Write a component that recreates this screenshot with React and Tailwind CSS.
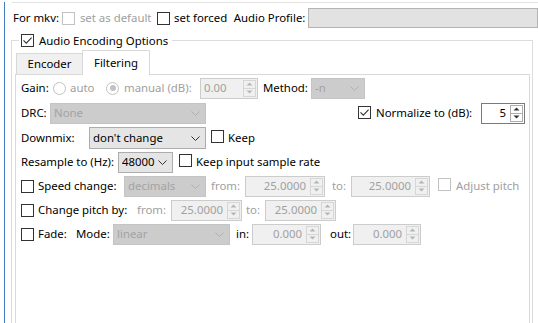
import React from 'react';

const GRAY = 'text-[#a0a0a0]';

const Check = ({ checked, disabled }) => (
    <span className={`inline-flex h-[13px] w-[13px] shrink-0 items-center justify-center border bg-white ${disabled ? 'border-[#c2c2c2]' : 'border-[#333333]'}`}>
        {checked && (
            <svg width="11" height="11" viewBox="0 0 11 11">
                <path d="M1.5 5.3 L4.3 8.2 L9.6 2.6" fill="none" stroke="#333333" strokeWidth="1.1" />
            </svg>
        )}
    </span>
);

const Radio = ({ checked }) => (
    <span className="inline-flex h-[13px] w-[13px] shrink-0 items-center justify-center rounded-full border border-[#c2c2c2] bg-white">
        {checked && <span className="h-[6px] w-[6px] rounded-full bg-[#c2c2c2]" />}
    </span>
);

const Arrow = ({ up, color }) => (
    <svg width="7" height="4" viewBox="0 0 7 4">
        <path d={up ? 'M0.5 3.5 L3.5 0.5 L6.5 3.5 Z' : 'M0.5 0.5 L3.5 3.5 L6.5 0.5 Z'} fill={color} />
    </svg>
);

// spin box with the little up/down buttons on the right
const Spin = ({ w, value, disabled, left }) => (
    <div className={`flex h-[21px] shrink-0 border ${w} ${disabled ? 'border-[#cccccc] bg-[#f0f0f0] text-[#a0a0a0]' : 'border-[#7a7a7a] bg-white text-black'}`}>
        <span className={`flex flex-1 items-center ${left ? 'justify-start pl-[3px]' : 'justify-end pr-[4px]'}`}>{value}</span>
        <span className={`my-[1px] mr-[1px] flex w-[13px] flex-col border ${disabled ? 'border-[#d6d6d6]' : 'border-[#adadad]'}`}>
            <span className={`flex flex-1 items-center justify-center border-b ${disabled ? 'border-[#d6d6d6]' : 'border-[#adadad]'}`}>
                <Arrow up color={disabled ? '#b5b5b5' : '#333333'} />
            </span>
            <span className="flex flex-1 items-center justify-center">
                <Arrow color={disabled ? '#b5b5b5' : '#333333'} />
            </span>
        </span>
    </div>
);

const Combo = ({ w, h = 'h-[21px]', value, disabled }) => (
    <div className={`flex shrink-0 items-center border pl-[3px] pr-[5px] ${w} ${h} ${disabled ? 'border-[#c4c4c4] bg-[#cccccc] text-[#a3a3a3]' : 'border-[#adadad] bg-[#e5e5e5] text-black'}`}>
        <span className="flex-1 overflow-hidden">{value}</span>
        <svg className="shrink-0" width="9" height="5" viewBox="0 0 9 5">
            <path d="M0.5 0.5 L4.5 4.5 L8.5 0.5" fill="none" stroke={disabled ? '#b0b0b0' : '#333333'} strokeWidth="1" />
        </svg>
    </div>
);

const Row = ({ className = '', children }) => (
    <div className={`flex h-[22px] items-center whitespace-nowrap ${className}`}>{children}</div>
);

export default function App() {
    return (
        <div className="h-[323px] w-[538px] overflow-hidden bg-white font-['Noto_Sans','DejaVu_Sans',sans-serif] text-[11.4px] leading-[14px] text-black">
            <div className="ml-[4px] h-full border-l border-[#3f7fc4]">
                <div className="ml-[7px] mt-[2px] h-px bg-[#e3e3e3]"></div>

                {/* mkv flags + profile */}
                <div className="mt-[5px] flex h-[20px] items-center whitespace-nowrap pl-[8px]">
                    <span className="w-[50px]">For mkv:</span>
                    <Check disabled />
                    <span className={`ml-[5px] w-[79px] ${GRAY}`}>set as default</span>
                    <Check />
                    <span className="ml-[4px] w-[61px]">set forced</span>
                    <span className="w-[76px]">Audio Profile:</span>
                    <div className="h-[20px] w-[230px] shrink-0 border border-[#b4b4b4] bg-[#e2e2e2]"></div>
                </div>

                {/* Audio Encoding Options group */}
                <div className="ml-[6px] mt-[12px] h-[340px] w-[522px] border border-[#dcdcdc]">
                    <div className="-mt-[7px] ml-[7px] flex h-[13px] w-fit items-center bg-white px-[2px]">
                        <Check checked />
                        <span className="ml-[5px] pr-[2px]">Audio Encoding Options</span>
                    </div>

                    <div className="relative z-10 mt-[3px] -mb-px ml-[4px] flex h-[25px] items-end">
                        <div className="mb-px flex h-[21px] w-[66px] items-center justify-center border-l border-t border-[#d9d9d9] bg-[#f0f0f0]">Encoder</div>
                        <div className="flex h-[25px] w-[68px] items-center justify-center border-x border-t border-[#d9d9d9] bg-white">Filtering</div>
                    </div>

                    <div className="ml-[3px] h-[300px] w-[515px] border border-[#d9d9d9] pl-[5px] pt-[2px]">
                        <Row>
                            <span className="w-[32px]">Gain:</span>
                            <Radio />
                            <span className={`ml-[4px] w-[36px] ${GRAY}`}>auto</span>
                            <Radio checked />
                            <span className={`ml-[5px] w-[76px] ${GRAY}`}>manual (dB):</span>
                            <Spin w="w-[58px]" value="0.00" disabled left />
                            <span className="ml-[5px] w-[48px]">Method:</span>
                            <Combo w="w-[54px]" value="-n" disabled />
                        </Row>

                        <Row className="mt-[3px]">
                            <span className="w-[29px]">DRC:</span>
                            <Combo w="w-[156px]" value="None" disabled />
                            <span className="ml-[152px]"><Check checked /></span>
                            <span className="ml-[5px] w-[105px]">Normalize to (dB):</span>
                            <Spin w="w-[44px]" value="5" />
                        </Row>

                        <Row className="mt-[3px]">
                            <span className="w-[68px]">Downmix:</span>
                            <Combo w="w-[117px]" h="h-[22px]" value="don't change" />
                            <span className="ml-[5px]"><Check /></span>
                            <span className="ml-[4px]">Keep</span>
                        </Row>

                        <Row className="mt-[2px]">
                            <span className="w-[97px]">Resample to (Hz):</span>
                            <Combo w="w-[55px]" value="48000" />
                            <span className="ml-[6px]"><Check /></span>
                            <span className="ml-[4px]">Keep input sample rate</span>
                        </Row>

                        <Row className="mt-[2px]">
                            <Check />
                            <span className="ml-[4px] w-[86px]">Speed change:</span>
                            <Combo w="w-[82px]" value="decimals" disabled />
                            <span className={`ml-[5px] w-[34px] ${GRAY}`}>from:</span>
                            <Spin w="w-[80px]" value="25.0000" disabled />
                            <span className={`ml-[7px] w-[19px] ${GRAY}`}>to:</span>
                            <Spin w="w-[79px]" value="25.0000" disabled />
                            <span className="ml-[8px]"><Check disabled /></span>
                            <span className={`ml-[5px] ${GRAY}`}>Adjust pitch</span>
                        </Row>

                        <Row className="mt-[2px]">
                            <Check />
                            <span className="ml-[4px] w-[99px]">Change pitch by:</span>
                            <span className={`w-[34px] ${GRAY}`}>from:</span>
                            <Spin w="w-[71px]" value="25.0000" disabled />
                            <span className={`ml-[4px] w-[19px] ${GRAY}`}>to:</span>
                            <Spin w="w-[71px]" value="25.0000" disabled />
                        </Row>

                        <Row className="mt-[2px]">
                            <Check />
                            <span className="ml-[4px] w-[38px]">Fade:</span>
                            <span className="w-[37px]">Mode:</span>
                            <Combo w="w-[117px]" value="linear" disabled />
                            <span className="ml-[6px] w-[16px]">in:</span>
                            <Spin w="w-[69px]" value="0.000" disabled />
                            <span className="ml-[9px] w-[23px]">out:</span>
                            <Spin w="w-[68px]" value="0.000" disabled />
                        </Row>
                    </div>
                </div>
            </div>
        </div>
    );
}
